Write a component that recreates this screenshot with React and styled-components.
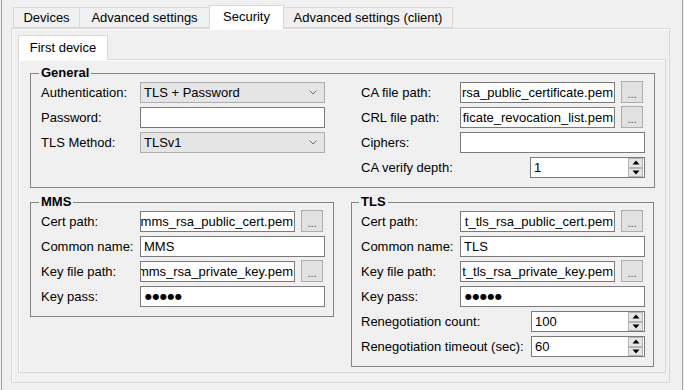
import React from 'react';
import styled, { createGlobalStyle } from 'styled-components';

const Global = createGlobalStyle`
  html, body { margin: 0; padding: 0; background: #f0f0f0; }
  body { font-family: "Liberation Sans", Arial, sans-serif; font-size: 13px; color: #000; }
  * { box-sizing: border-box; }
`;

const Window = styled.div`
  width: 684px;
  height: 390px;
  padding: 0 1px;
  background: #f0f0f0;
  overflow: hidden;
`;

const Frame = styled.div`
  height: 100%;
  border-left: 1px solid #a0a0a0;
  border-right: 1px solid #a0a0a0;
  padding: 5px 12px 0 9px;
`;

const TabRow = styled.div`
  display: flex;
  align-items: flex-end;
  height: ${p => p.$h}px;
  padding-left: ${p => p.$pl}px;
`;

const Tab = styled.div`
  width: ${p => p.$w}px;
  height: ${p => (p.$active ? p.$h + 3 : p.$h)}px;
  margin-left: ${p => (p.$first ? 0 : -1)}px;
  margin-bottom: ${p => (p.$active ? -1 : 0)}px;
  border: 1px solid #d9d9d9;
  border-bottom: ${p => (p.$active ? 'none' : '1px solid #d9d9d9')};
  background: ${p => (p.$active ? '#ffffff' : '#f0f0f0')};
  display: flex;
  align-items: center;
  justify-content: center;
  white-space: nowrap;
  position: relative;
  z-index: ${p => (p.$active ? 2 : 1)};
  padding-bottom: ${p => (p.$active ? 2 : 0)}px;
`;

const Page = styled.div`
  height: 355px;
  border: 1px solid #d9d9d9;
  box-shadow: inset 1px 1px 0 #fcfcfc;
  background: #f0f0f0;
  padding: 6px 3px 9px 6px;
`;

const InnerPanel = styled.div`
  height: 314px;
  border: 1px solid #d9d9d9;
  box-shadow: inset 1px 1px 0 #fcfcfc;
  background: #f0f0f0;
  padding: 6px 10px 0 11px;
`;

const Group = styled.fieldset`
  margin: 0;
  min-width: 0;
  width: ${p => p.$w}px;
  border: 1px solid #848484;
  padding: 2px ${p => p.$pr}px 9px ${p => p.$pl}px;
`;

const Legend = styled.legend`
  font-weight: bold;
  line-height: 14px;
  padding: 0 2px;
  margin-left: -2px;
`;

const Columns = styled.div`
  display: flex;
  gap: 36px;
  align-items: flex-start;
`;

const FormGrid = styled.div`
  display: grid;
  grid-template-columns: 99px 185px;
  grid-auto-rows: 21px;
  row-gap: 4px;
  align-items: center;
`;

const Label = styled.div`
  white-space: nowrap;
  line-height: 15px;
`;

const BottomRow = styled.div`
  display: flex;
  gap: 17px;
  align-items: flex-start;
  margin-top: 7px;
`;

const TextBox = styled.div`
  height: 21px;
  width: ${p => (p.$w ? `${p.$w}px` : '100%')};
  border: 1px solid #7a7a7a;
  background: #fff;
  display: flex;
  align-items: center;
  justify-content: ${p => (p.$right ? 'flex-end' : 'flex-start')};
  padding: 0 ${p => (p.$right ? 1 : 3)}px;
  overflow: hidden;
  white-space: nowrap;
  flex: ${p => (p.$w ? `0 0 ${p.$w}px` : '1 1 auto')};
`;

const Dots = styled.span`
  font-family: "DejaVu Sans", sans-serif;
  font-size: 8px;
  letter-spacing: 0.5px;
  padding-left: 1px;
`;

const Combo = styled.div`
  height: 21px;
  border: 1px solid #adadad;
  background: #e5e5e5;
  display: flex;
  align-items: center;
  justify-content: space-between;
  padding: 0 7px 0 3px;
`;

const PathCell = styled.div`
  display: flex;
  align-items: flex-start;
  gap: 6px;
  height: 21px;
`;

const BrowseButton = styled.div`
  width: 22px;
  height: 22px;
  margin-top: -1px;
  border: 1px solid #adadad;
  background: #e1e1e1;
  color: #3a5070;
  font-size: 11px;
  display: flex;
  align-items: flex-end;
  justify-content: center;
  padding-bottom: 3px;
  line-height: 10px;
`;

const Spin = styled.div`
  height: 21px;
  width: ${p => p.$w}px;
  justify-self: end;
  border: 1px solid #7a7a7a;
  background: #fff;
  display: flex;
  align-items: stretch;
`;

const SpinValue = styled.div`
  flex: 1;
  display: flex;
  align-items: center;
  padding-left: 3px;
`;

const SpinButtons = styled.div`
  width: 15px;
  margin-right: 1px;
  display: flex;
  flex-direction: column;
`;

const SpinBtn = styled.div`
  flex: 1;
  border: 1px solid #b4b4b4;
  background: #e6e6e6;
  display: flex;
  align-items: center;
  justify-content: center;
`;

const Chevron = () => (
  <svg width="8" height="5" viewBox="0 0 8 5">
    <polyline points="0.5,0.5 4,4 7.5,0.5" fill="none" stroke="#707070" strokeWidth="1" />
  </svg>
);

const Tri = ({ up }) => (
  <svg width="8" height="5" viewBox="0 0 8 5">
    {up ? <polygon points="0.5,4.5 4,0.5 7.5,4.5" fill="#000" /> : <polygon points="0.5,0.5 7.5,0.5 4,4.5" fill="#000" />}
  </svg>
);

const SpinBox = ({ value, w }) => (
  <Spin $w={w}>
    <SpinValue>{value}</SpinValue>
    <SpinButtons>
      <SpinBtn><Tri up /></SpinBtn>
      <SpinBtn><Tri /></SpinBtn>
    </SpinButtons>
  </Spin>
);

const PathField = ({ value }) => (
  <PathCell>
    <TextBox $w={155} $right>{value}</TextBox>
    <BrowseButton>...</BrowseButton>
  </PathCell>
);

const tabs = [
  { label: 'Devices', w: 67 },
  { label: 'Advanced settings', w: 131 },
  { label: 'Security', w: 75, active: true },
  { label: 'Advanced settings (client)', w: 170 },
];

export default function App() {
  return (
    <>
      <Global />
      <Window>
        <Frame>
          <TabRow $h={23} $pl={2}>
            {tabs.map((t, i) => (
              <Tab key={t.label} $w={t.w} $h={21} $active={t.active} $first={i === 0}>
                {t.label}
              </Tab>
            ))}
          </TabRow>
          <Page>
            <TabRow $h={24} $pl={0}>
              <Tab $w={90} $h={22} $active $first>First device</Tab>
            </TabRow>
            <InnerPanel>
              <Group $w={625} $pl={10} $pr={9}>
                <Legend>General</Legend>
                <Columns>
                  <FormGrid>
                    <Label>Authentication:</Label>
                    <Combo>TLS + Password<Chevron /></Combo>
                    <Label>Password:</Label>
                    <TextBox />
                    <Label>TLS Method:</Label>
                    <Combo>TLSv1<Chevron /></Combo>
                  </FormGrid>
                  <FormGrid>
                    <Label>CA file path:</Label>
                    <PathField value="rsa_public_certificate.pem" />
                    <Label>CRL file path:</Label>
                    <PathField value="ficate_revocation_list.pem" />
                    <Label>Ciphers:</Label>
                    <TextBox />
                    <Label>CA verify depth:</Label>
                    <SpinBox value="1" w={115} />
                  </FormGrid>
                </Columns>
              </Group>
              <BottomRow>
                <Group $w={304} $pl={10} $pr={8}>
                  <Legend>MMS</Legend>
                  <FormGrid>
                    <Label>Cert path:</Label>
                    <PathField value="mms_rsa_public_cert.pem" />
                    <Label>Common name:</Label>
                    <TextBox>MMS</TextBox>
                    <Label>Key file path:</Label>
                    <PathField value="mms_rsa_private_key.pem" />
                    <Label>Key pass:</Label>
                    <TextBox><Dots>●●●●●</Dots></TextBox>
                  </FormGrid>
                </Group>
                <Group $w={303} $pl={9} $pr={8}>
                  <Legend>TLS</Legend>
                  <FormGrid>
                    <Label>Cert path:</Label>
                    <PathField value="t_tls_rsa_public_cert.pem" />
                    <Label>Common name:</Label>
                    <TextBox>TLS</TextBox>
                    <Label>Key file path:</Label>
                    <PathField value="t_tls_rsa_private_key.pem" />
                    <Label>Key pass:</Label>
                    <TextBox><Dots>●●●●●</Dots></TextBox>
                    <Label>Renegotiation count:</Label>
                    <SpinBox value="100" w={114} />
                    <Label>Renegotiation timeout (sec):</Label>
                    <SpinBox value="60" w={114} />
                  </FormGrid>
                </Group>
              </BottomRow>
            </InnerPanel>
          </Page>
        </Frame>
      </Window>
    </>
  );
}
